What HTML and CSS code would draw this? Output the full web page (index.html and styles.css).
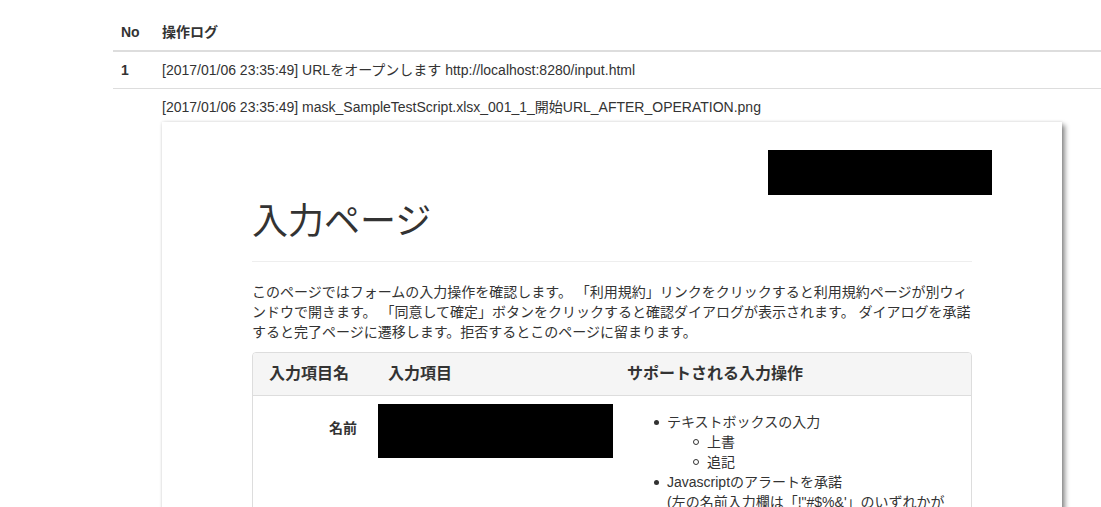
FILE: index.html
```html
<!DOCTYPE html>
<html lang="ja">
<head>
<meta charset="utf-8">
<title>操作ログ</title>
<link rel="stylesheet" href="styles.css">
</head>
<body>
<div class="page">
  <table class="log">
    <colgroup><col class="col-no"><col></colgroup>
    <thead>
      <tr><th>No</th><th>操作ログ</th></tr>
    </thead>
    <tbody>
      <tr class="first">
        <td class="no">1</td>
        <td>[2017/01/06 23:35:49] URLをオープンします http://localhost:8280/input.html</td>
      </tr>
      <tr>
        <td></td>
        <td>
          <div>[2017/01/06 23:35:49] mask_SampleTestScript.xlsx_001_1_開始URL_AFTER_OPERATION.png</div>
          <div class="shot">
            <div class="container">
              <div class="topbar"><div class="mask mask-top"></div></div>
              <div class="page-header"><h1>入力ページ</h1></div>
              <p class="lead-text">このページではフォームの入力操作を確認します。 「利用規約」リンクをクリックすると利用規約ページが別ウィンドウで開きます。 「同意して確定」ボタンをクリックすると確認ダイアログが表示されます。 ダイアログを承諾すると完了ページに遷移します。拒否するとこのページに留まります。</p>
              <div class="panel">
                <table class="spec">
                  <colgroup><col class="c1"><col class="c2"><col></colgroup>
                  <thead>
                    <tr><th>入力項目名</th><th>入力項目</th><th>サポートされる入力操作</th></tr>
                  </thead>
                  <tbody>
                    <tr>
                      <td class="label">名前</td>
                      <td class="field"><div class="mask mask-input"></div></td>
                      <td class="ops">
                        <ul>
                          <li>テキストボックスの入力
                            <ul class="sub">
                              <li>上書</li>
                              <li>追記</li>
                            </ul>
                          </li>
                          <li>Javascriptのアラートを承諾<br>(左の名前入力欄は「!"#$%&amp;'」のいずれかが入力されている場合にアラートが表示されます)</li>
                        </ul>
                      </td>
                    </tr>
                  </tbody>
                </table>
              </div>
            </div>
          </div>
        </td>
      </tr>
    </tbody>
  </table>
</div>
</body>
</html>
```

FILE: styles.css
```css
html, body {
  margin: 0;
  padding: 0;
  background: #fff;
}

body {
  font-family: "Liberation Sans", "Noto Sans CJK JP", sans-serif;
  font-size: 14px;
  line-height: 20px;
  color: #333;
}

.page {
  height: 507px;
  overflow: hidden;
  padding: 14px 0 0 113px;
  box-sizing: border-box;
}

.log {
  width: 100%;
  border-collapse: collapse;
  table-layout: fixed;
}

.log .col-no {
  width: 41px;
}

.log th {
  text-align: left;
  font-weight: bold;
  padding: 8px;
  border-bottom: 2px solid #ddd;
}

.log td {
  padding: 8px;
  vertical-align: top;
}

.log tr.first td {
  border-bottom: 1px solid #ddd;
}

.log td.no {
  font-weight: bold;
}

.shot {
  margin-top: 5px;
  width: 900px;
  height: 420px;
  background: #fff;
  box-shadow: 3px 3px 5px rgba(0, 0, 0, 0.45), 0 0 3px rgba(0, 0, 0, 0.12);
}

.container {
  width: 720px;
  margin: 0 auto;
  padding-top: 28px;
}

.topbar {
  display: flex;
  justify-content: flex-end;
  margin-right: -20px;
}

.mask {
  background: #000;
}

.mask-top {
  width: 224px;
  height: 45px;
}

.page-header {
  margin-top: 7px;
  padding-bottom: 9px;
  border-bottom: 1px solid #eee;
  margin-bottom: 20px;
}

.page-header h1 {
  margin: 0 0 10px;
  font-size: 36px;
  line-height: 39.6px;
  font-weight: normal;
}

.lead-text {
  margin: 0 0 10px;
}

.panel {
  border: 1px solid #ddd;
  border-radius: 4px;
  overflow: hidden;
}

.spec {
  width: 100%;
  border-collapse: collapse;
  table-layout: fixed;
}

.spec .c1 {
  width: 119px;
}

.spec .c2 {
  width: 239px;
}

.spec th {
  background: #f5f5f5;
  text-align: left;
  font-size: 16px;
  font-weight: bold;
  line-height: 20px;
  padding: 11px 16px;
  border-bottom: 1px solid #ddd;
}

.spec td {
  vertical-align: top;
}

.spec td.label {
  text-align: right;
  font-weight: bold;
  padding: 22px 15px;
}

.spec td.field {
  padding: 8px 6px;
}

.mask-input {
  width: 235px;
  height: 54px;
}

.spec td.ops {
  padding: 16px 15px;
}

.ops ul {
  margin: 0;
  padding-left: 41px;
  list-style: none;
}

.ops li::before {
  content: "";
  display: inline-block;
  width: 5px;
  height: 5px;
  border-radius: 50%;
  background: #333;
  margin-left: -13px;
  margin-right: 8px;
  vertical-align: 2px;
}

.ops ul.sub {
  padding-left: 40px;
}

.ops ul.sub li::before {
  width: 6px;
  height: 6px;
  box-sizing: border-box;
  background: transparent;
  border: 1px solid #333;
  margin-left: -14px;
  margin-right: 8px;
}
```
